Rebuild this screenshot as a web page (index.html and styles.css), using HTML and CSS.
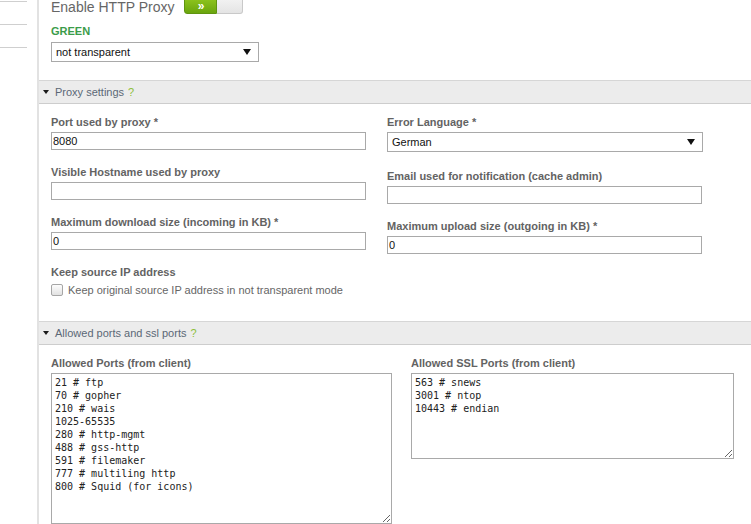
FILE: index.html
```html
<!DOCTYPE html>
<html lang="en">
<head>
<meta charset="utf-8">
<title>Proxy settings</title>
<link rel="stylesheet" href="styles.css">
</head>
<body>
<div class="layout">
  <aside class="sidebar">
    <ul class="nav">
      <li></li>
      <li></li>
      <li></li>
    </ul>
  </aside>

  <main class="content">
    <div class="intro">
      <div class="enable-row">
        <span class="enable-label">Enable HTTP Proxy</span>
        <span class="toggle">
          <span class="toggle-on">&raquo;</span>
          <span class="toggle-off"></span>
        </span>
      </div>
      <div class="zone">GREEN</div>
      <div class="select select-mode">
        <span>not transparent</span>
        <span class="caret"></span>
      </div>
    </div>

    <section class="panel">
      <header class="panel-head">
        <span class="arrow"></span>
        <span class="panel-title">Proxy settings</span>
        <span class="help">?</span>
      </header>
      <div class="panel-body settings">
        <div class="col">
          <label class="field-label">Port used by proxy *</label>
          <input class="text" type="text" value="8080">
          <label class="field-label">Visible Hostname used by proxy</label>
          <input class="text" type="text" value="">
          <label class="field-label">Maximum download size (incoming in KB) *</label>
          <input class="text" type="text" value="0">
          <label class="field-label">Keep source IP address</label>
          <div class="check-row">
            <span class="checkbox"></span>
            <span class="check-text">Keep original source IP address in not transparent mode</span>
          </div>
        </div>
        <div class="col">
          <label class="field-label">Error Language *</label>
          <div class="select select-lang">
            <span>German</span>
            <span class="caret"></span>
          </div>
          <label class="field-label">Email used for notification (cache admin)</label>
          <input class="text" type="text" value="">
          <label class="field-label">Maximum upload size (outgoing in KB) *</label>
          <input class="text" type="text" value="0">
        </div>
      </div>
    </section>

    <section class="panel">
      <header class="panel-head">
        <span class="arrow"></span>
        <span class="panel-title">Allowed ports and ssl ports</span>
        <span class="help">?</span>
      </header>
      <div class="panel-body ports">
        <div class="port-col port-left">
          <label class="field-label">Allowed Ports (from client)</label>
          <textarea class="ports-area tall">21 # ftp
70 # gopher
210 # wais
1025-65535
280 # http-mgmt
488 # gss-http
591 # filemaker
777 # multiling http
800 # Squid (for icons)</textarea>
        </div>
        <div class="port-col port-right">
          <label class="field-label">Allowed SSL Ports (from client)</label>
          <textarea class="ports-area short">563 # snews
3001 # ntop
10443 # endian</textarea>
        </div>
      </div>
    </section>
  </main>
</div>
</body>
</html>
```

FILE: styles.css
```css
* {
  box-sizing: border-box;
}

html, body {
  margin: 0;
  padding: 0;
  height: 524px;
  overflow: hidden;
  background: #fff;
  font-family: "Liberation Sans", Arial, sans-serif;
  font-size: 11px;
  color: #666;
}

.layout {
  display: flex;
  height: 524px;
}

/* left navigation rail */
.sidebar {
  width: 39px;
  flex: 0 0 39px;
  border-right: 2px solid #e2e2e2;
}

.nav {
  list-style: none;
  margin: -21px 0 0;
  padding: 0;
}

.nav li {
  width: 27px;
  height: 23px;
  border-bottom: 1px solid #cfcfcf;
}

.content {
  flex: 1;
  min-width: 0;
}

/* top block: switch, zone, mode */
.intro {
  padding: 0 0 18px 12px;
}

.enable-row {
  display: flex;
  align-items: flex-start;
  gap: 10px;
  margin-top: -1px;
}

.enable-label {
  font-size: 14px;
  line-height: 17px;
  color: #666;
}

.toggle {
  display: flex;
  margin-top: -3px;
  height: 18px;
}

.toggle-on {
  width: 33px;
  height: 18px;
  padding-top: 4px;
  background: linear-gradient(#92c81f, #6aa50e);
  border: 1px solid #5f9410;
  border-radius: 0 0 0 3px;
  color: #fff;
  font-weight: bold;
  font-size: 12px;
  line-height: 11px;
  text-align: center;
}

.toggle-off {
  width: 26px;
  height: 18px;
  background: linear-gradient(#f4f4f4, #e4e4e4);
  border: 1px solid #c9c9c9;
  border-left: none;
  border-radius: 0 0 3px 0;
}

.zone {
  margin-top: 9px;
  font-weight: bold;
  font-size: 11px;
  line-height: 13px;
  color: #3b9c4a;
}

.select {
  display: flex;
  align-items: center;
  justify-content: space-between;
  height: 20px;
  padding: 0 7px 0 4px;
  border: 1px solid #a9a9a9;
  background: #fff;
  color: #111;
  font-size: 11px;
}

.select-mode {
  width: 208px;
  margin-top: 4px;
}

.select-lang {
  width: 316px;
  margin-bottom: 17px;
}

.caret {
  width: 0;
  height: 0;
  border-left: 4px solid transparent;
  border-right: 4px solid transparent;
  border-top: 6px solid #111;
}

/* collapsible panels */
.panel-head {
  display: flex;
  align-items: center;
  height: 24px;
  padding-left: 4px;
  background: #ececec;
  border-top: 1px solid #d6d6d6;
  border-bottom: 1px solid #cdcdcd;
}

.arrow {
  width: 0;
  height: 0;
  border-left: 3px solid transparent;
  border-right: 3px solid transparent;
  border-top: 4px solid #1a1a1a;
  margin-right: 6px;
}

.panel-title {
  color: #5b6876;
  font-size: 11px;
}

.help {
  margin-left: 4px;
  color: #8dbf3a;
  font-size: 11px;
}

.panel-body {
  padding: 11px 0 0 12px;
}

.settings {
  display: flex;
  padding-bottom: 25px;
}

.col {
  width: 336px;
  display: flex;
  flex-direction: column;
  align-items: flex-start;
}

.field-label {
  display: block;
  font-weight: bold;
  font-size: 11px;
  line-height: 14px;
  margin-bottom: 3px;
  color: #636363;
}

.text {
  width: 315px;
  height: 18px;
  margin: 0 0 15px;
  padding: 0 1px;
  border: 1px solid #a9a9a9;
  border-radius: 0;
  font-family: "Liberation Sans", Arial, sans-serif;
  font-size: 11px;
  color: #111;
  background: #fff;
  outline: none;
}

.check-row {
  display: flex;
  align-items: center;
  gap: 5px;
  margin-top: 1px;
  height: 13px;
}

.checkbox {
  width: 12px;
  height: 12px;
  border: 1px solid #a6a6a6;
  border-radius: 2px;
  background: linear-gradient(#fdfdfd, #e2e2e2);
}

.check-text {
  font-size: 11px;
  color: #666;
}

/* port lists */
.ports {
  display: flex;
  gap: 19px;
}

.port-left {
  width: 341px;
}

.port-right {
  width: 323px;
}

.ports-area {
  display: block;
  width: 100%;
  margin: 0;
  padding: 2px 3px;
  border: 1px solid #a9a9a9;
  font-family: "DejaVu Sans Mono", monospace;
  font-size: 10px;
  line-height: 13px;
  color: #222;
  background: #fff;
  outline: none;
}

.tall {
  height: 151px;
}

.short {
  height: 86px;
}
```
